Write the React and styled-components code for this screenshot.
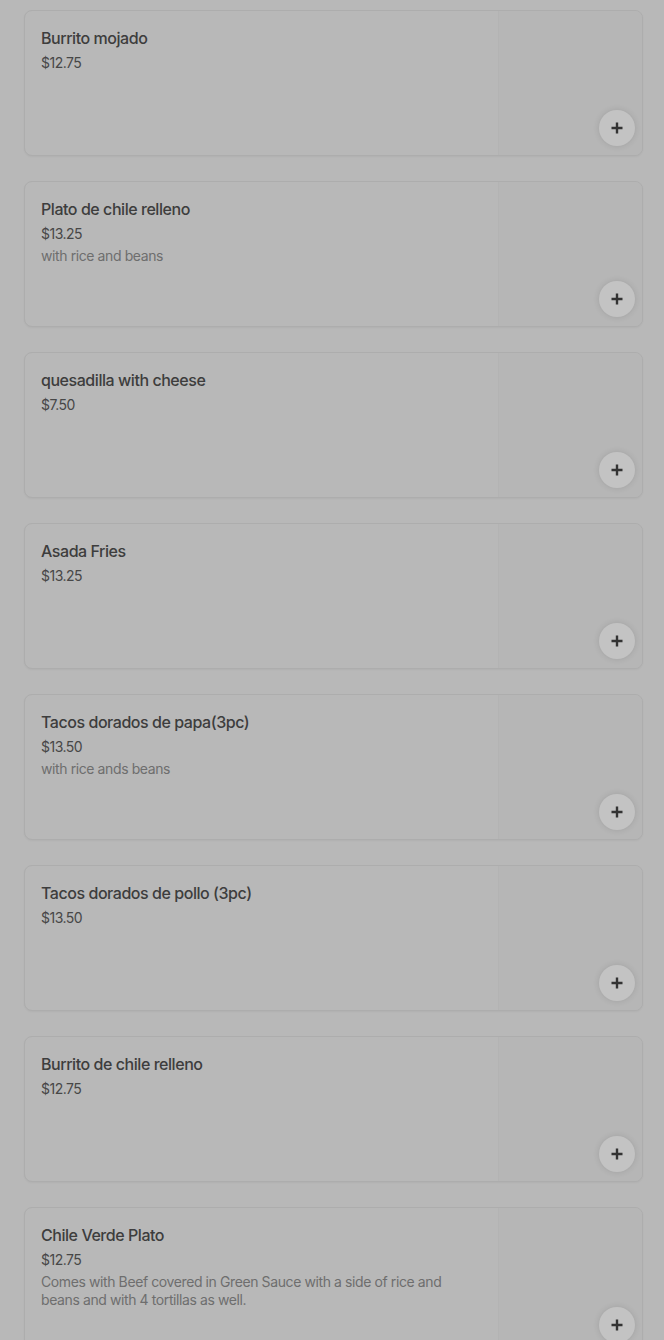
import React from "react";
import styled, { createGlobalStyle } from "styled-components";

const GlobalStyle = createGlobalStyle`
  html, body {
    margin: 0;
    padding: 0;
    background: #b8b8b8;
  }
  body {
    font-family: Inter, "Noto Sans", sans-serif;
  }
`;

const List = styled.div`
  display: flex;
  flex-direction: column;
  gap: 25px;
  padding: 10px 21px 40px 24px;
`;

const Card = styled.div`
  display: flex;
  border: 1px solid #adadad;
  border-radius: 8px;
  background: #b8b8b8;
  box-shadow: 0 1px 2px rgba(0, 0, 0, 0.04);
  overflow: hidden;
`;

const Info = styled.div`
  flex: 1;
  min-width: 0;
  padding: 15px 16px 16px 16px;
  display: flex;
  flex-direction: column;
`;

const Title = styled.div`
  font-size: 16px;
  line-height: 24px;
  font-weight: 500;
  color: #3d3d3d;
  letter-spacing: -0.45px;
`;

const Price = styled.div`
  margin-top: 3px;
  font-size: 14px;
  line-height: 20px;
  color: #474747;
  letter-spacing: -0.5px;
`;

const Desc = styled.div`
  margin-top: 3px;
  font-size: 14px;
  line-height: 18px;
  color: #6e6e6e;
  letter-spacing: -0.4px;
`;

const Thumb = styled.div`
  position: relative;
  flex: 0 0 143px;
  height: 144px;
  background: #b6b6b6;
  border-left: 1px solid #b3b3b3;
`;

const AddButton = styled.button`
  position: absolute;
  right: 7px;
  bottom: 9px;
  width: 36px;
  height: 36px;
  border-radius: 50%;
  border: none;
  padding: 0;
  background: #c3c3c3;
  box-shadow: 0 0 6px rgba(0, 0, 0, 0.12);
  display: flex;
  align-items: center;
  justify-content: center;
  cursor: pointer;
`;

const items = [
  { name: "Burrito mojado", price: "$12.75" },
  { name: "Plato de chile relleno", price: "$13.25", desc: "with rice and beans" },
  { name: "quesadilla with cheese", price: "$7.50" },
  { name: "Asada Fries", price: "$13.25" },
  { name: "Tacos dorados de papa(3pc)", price: "$13.50", desc: "with rice ands beans" },
  { name: "Tacos dorados de pollo (3pc)", price: "$13.50" },
  { name: "Burrito de chile relleno", price: "$12.75" },
  {
    name: "Chile Verde Plato",
    price: "$12.75",
    desc: "Comes with Beef covered in Green Sauce with a side of rice and beans and with 4 tortillas as well.",
  },
];

function PlusIcon() {
  return (
    <svg width="14" height="14" viewBox="0 0 14 14">
      <path d="M7 1.5v11M1.5 7h11" stroke="#333" strokeWidth="2.4" />
    </svg>
  );
}

export default function App() {
  return (
    <>
      <GlobalStyle />
      <List>
        {items.map((item) => (
          <Card key={item.name}>
            <Info>
              <Title>{item.name}</Title>
              <Price>{item.price}</Price>
              {item.desc ? <Desc>{item.desc}</Desc> : null}
            </Info>
            <Thumb>
              <AddButton aria-label="Add">
                <PlusIcon />
              </AddButton>
            </Thumb>
          </Card>
        ))}
      </List>
    </>
  );
}
